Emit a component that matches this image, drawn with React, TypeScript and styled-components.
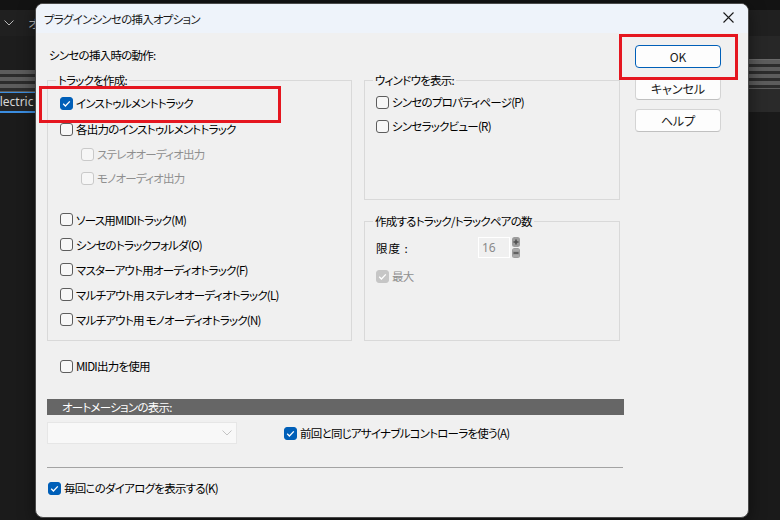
import React from 'react';
import styled, { createGlobalStyle } from 'styled-components';

const GlobalStyle = createGlobalStyle`
    html, body {
        margin: 0;
        padding: 0;
    }
    body {
        width: 780px;
        height: 520px;
        overflow: hidden;
        background: #1a1a1a;
        font-family: 'Noto Sans CJK JP', 'Noto Sans', sans-serif;
    }
`;

interface CheckProps {
    label: string;
    checked?: boolean;
    disabled?: boolean;
}

const CheckMark = () => (
    <svg width="13" height="13" viewBox="0 0 13 13">
        <path d="M3.2 6.8 L5.4 9 L9.8 4.4" stroke="#fff" strokeWidth="1.3" fill="none" />
    </svg>
);

const Check = ({ label, checked, disabled }: CheckProps) => (
    <>
        <Box $checked={checked} $disabled={disabled}>
            {checked && <CheckMark />}
        </Box>
        <Label $disabled={disabled}>{label}</Label>
    </>
);

const CloseIcon = () => (
    <svg width="11" height="11" viewBox="0 0 11 11">
        <path d="M0.5 0.5 L10.5 10.5 M10.5 0.5 L0.5 10.5" stroke="#1a1a1a" strokeWidth="1.1" />
    </svg>
);

const Chevron = ({ color }: { color: string }) => (
    <svg width="10" height="6" viewBox="0 0 10 6" style={{ flexShrink: 0 }}>
        <path d="M0.5 0.5 L5 5 L9.5 0.5" stroke={color} strokeWidth="1" fill="none" />
    </svg>
);

const SpinIcon = () => (
    <svg width="8" height="21" viewBox="0 0 8 21">
        <rect x="0" y="0" width="8" height="10" rx="2.5" fill="#9c9c9c" />
        <rect x="0" y="11" width="8" height="10" rx="2.5" fill="#9c9c9c" />
        <path d="M1.5 5 H6.5 M4 2.5 V7.5" stroke="#4e4e4e" strokeWidth="1.6" />
        <path d="M1.5 16 H6.5" stroke="#4e4e4e" strokeWidth="1.6" />
        <path d="M1 13 H7 M1 19 H7" stroke="#bdbdbd" strokeWidth="0.8" />
    </svg>
);

const App = () => {
    return (
        <Desk>
            <GlobalStyle />
            <TopStrip />
            <Toolbar>
                <ToolGroup>
                    <Chevron color="#b8b8b8" />
                    <ToolText>オ</ToolText>
                </ToolGroup>
            </Toolbar>
            <Workspace>
                <TrackList>
                    <TrackHeader />
                    <Stripes />
                    <SelectedTrack>
                        <span>Electric Piano</span>
                    </SelectedTrack>
                </TrackList>
                <Arranger>
                    <Ruler />
                    <Stripes $tall />
                    <ArrangerRow />
                </Arranger>
            </Workspace>

            <Dialog>
                <TitleBar>
                    <Title>プラグインシンセの挿入オプション</Title>
                    <CloseButton>
                        <CloseIcon />
                    </CloseButton>
                </TitleBar>
                <Body>
                    <MainCol>
                        <Heading>シンセの挿入時の動作:</Heading>
                        <GroupsRow>
                            <Group $width={305} $height={268}>
                                <legend>トラックを作成:</legend>
                                <Row $h={26}>
                                    <Check label="インストゥルメントトラック" checked />
                                </Row>
                                <Row $h={26}>
                                    <Check label="各出力のインストゥルメントトラック" />
                                </Row>
                                <Row $indent={21} $h={24}>
                                    <Check label="ステレオオーディオ出力" disabled />
                                </Row>
                                <Row $indent={21} $h={24}>
                                    <Check label="モノオーディオ出力" disabled />
                                </Row>
                                <Spacer $h={17} />
                                <Row>
                                    <Check label="ソース用MIDIトラック(M)" />
                                </Row>
                                <Row>
                                    <Check label="シンセのトラックフォルダ(O)" />
                                </Row>
                                <Row>
                                    <Check label="マスターアウト用オーディオトラック(F)" />
                                </Row>
                                <Row>
                                    <Check label="マルチアウト用 ステレオオーディオトラック(L)" />
                                </Row>
                                <Row>
                                    <Check label="マルチアウト用 モノオーディオトラック(N)" />
                                </Row>
                            </Group>
                            <RightCol>
                                <Group $width={256} $height={127}>
                                    <legend>ウィンドウを表示:</legend>
                                    <Row $h={24} $indent={-1}>
                                        <Check label="シンセのプロパティページ(P)" />
                                    </Row>
                                    <Row $h={24} $indent={-1}>
                                        <Check label="シンセラックビュー(R)" />
                                    </Row>
                                </Group>
                                <Group $width={256} $height={127}>
                                    <legend>作成するトラック/トラックペアの数</legend>
                                    <LimitRow>
                                        <LimitLabel>限度 :</LimitLabel>
                                        <NumberBox>16</NumberBox>
                                        <SpinIcon />
                                    </LimitRow>
                                    <Row $h={24} $indent={-1} style={{ marginTop: 6 }}>
                                        <Check label="最大" checked disabled />
                                    </Row>
                                </Group>
                            </RightCol>
                        </GroupsRow>
                        <Row $h={24} $indent={13} style={{ marginTop: 13 }}>
                            <Check label="MIDI出力を使用" />
                        </Row>
                        <SectionBar>オートメーションの表示:</SectionBar>
                        <AutomationRow>
                            <Dropdown>
                                <Chevron color="#c4c4c4" />
                            </Dropdown>
                            <Row $h={24} $indent={0}>
                                <Check label="前回と同じアサイナブルコントローラを使う(A)" checked />
                            </Row>
                        </AutomationRow>
                        <Separator />
                        <Row $h={24} $indent={1}>
                            <Check label="毎回このダイアログを表示する(K)" checked />
                        </Row>
                    </MainCol>
                    <ButtonCol>
                        <Button $primary>OK</Button>
                        <Button>キャンセル</Button>
                        <Button>ヘルプ</Button>
                    </ButtonCol>
                </Body>
                <Highlight $left={3} $top={82} $width={242} $height={37} />
                <Highlight $left={583} $top={30} $width={119} $height={46} />
            </Dialog>
        </Desk>
    );
};

export default App;

const Desk = styled.div`
    position: relative;
    width: 780px;
    height: 520px;
    overflow: hidden;
    background: #1a1a1a;
    display: flex;
    flex-direction: column;
`;

const TopStrip = styled.div`
    height: 10px;
    background: #131313;
`;

const Toolbar = styled.div`
    height: 26px;
    background: #202020;
    display: flex;
    align-items: center;
`;

const ToolGroup = styled.div`
    display: flex;
    align-items: center;
    gap: 14px;
    padding-left: 4px;
`;

const ToolText = styled.span`
    color: #bcbcbc;
    font-size: 12px;
    white-space: nowrap;
`;

const Workspace = styled.div`
    display: flex;
    flex: 1;
`;

const TrackList = styled.div`
    width: 320px;
    display: flex;
    flex-direction: column;
    background: #1b1b1b;
`;

const TrackHeader = styled.div`
    height: 34px;
    background: #1d1d1d;
`;

const Stripes = styled.div<{ $tall?: boolean }>`
    height: ${({ $tall }) => ($tall ? '29px' : '22px')};
    background: repeating-linear-gradient(
        to bottom,
        #5c5c5c 0 4px,
        #2c2c2c 4px 7px
    );
`;

const SelectedTrack = styled.div`
    height: 18px;
    border-top: 1px solid #3b8de0;
    border-bottom: 2px solid #3b8de0;
    background: #252525;
    color: #d8d8d8;
    font-family: 'Noto Sans', sans-serif;
    font-size: 12px;
    line-height: 18px;
    white-space: nowrap;
    overflow: hidden;

    span {
        display: inline-block;
        margin-left: -7px;
    }
`;

const Arranger = styled.div`
    flex: 1;
    display: flex;
    flex-direction: column;
    background: #1a1a1a;
`;

const Ruler = styled.div`
    height: 23px;
    background: #272727;
    border-bottom: 1px solid #6a6a6a;
`;

const ArrangerRow = styled.div`
    height: 23px;
    background: #2a2a2a;
`;

const Dialog = styled.div`
    position: absolute;
    left: 35px;
    top: 3px;
    width: 714px;
    height: 515px;
    box-sizing: border-box;
    border: 1px solid #4a4a4a;
    border-radius: 8px;
    background: #f0f0f0;
    overflow: hidden;
    display: flex;
    flex-direction: column;
    font-family: 'Noto Sans CJK JP', 'Noto Sans', sans-serif;
    font-feature-settings: 'palt';
    font-size: 11.5px;
    letter-spacing: -0.75px;
    color: #000;
    box-shadow: 0 4px 16px rgba(0, 0, 0, 0.5);
`;

const TitleBar = styled.div`
    height: 29px;
    background: #eef3fa;
    display: flex;
    align-items: center;
    justify-content: space-between;
    padding: 0 10px 0 8px;
`;

const Title = styled.div`
    color: #1a1a1a;
`;

const CloseButton = styled.div`
    width: 20px;
    display: flex;
    justify-content: center;
    margin-top: -2px;
`;

const Body = styled.div`
    flex: 1;
    display: flex;
    padding-left: 11px;
`;

const MainCol = styled.div`
    width: 578px;
    padding-top: 15px;
    display: flex;
    flex-direction: column;
`;

const Heading = styled.div`
    line-height: 14px;
    height: 14px;
    padding-left: 2px;
    margin-bottom: 11px;
`;

const GroupsRow = styled.div`
    display: flex;
    gap: 12px;
`;

const RightCol = styled.div`
    display: flex;
    flex-direction: column;
    gap: 14px;
`;

const Group = styled.fieldset<{ $width: number; $height: number }>`
    margin: 0;
    padding: 3px 0 0 12px;
    width: ${({ $width }) => $width}px;
    height: ${({ $height }) => $height}px;
    box-sizing: border-box;
    border: 1px solid #d9d9d9;
    border-radius: 0;
    min-width: 0;

    legend {
        padding: 0 2px;
        margin-left: -4px;
        line-height: 14px;
        color: #000;
    }
`;

const Row = styled.div<{ $indent?: number; $h?: number }>`
    display: flex;
    align-items: center;
    gap: 3px;
    height: ${({ $h }) => $h ?? 25}px;
    padding-left: ${({ $indent }) => Math.max($indent ?? 0, 0)}px;
    margin-left: ${({ $indent }) => Math.min($indent ?? 0, 0)}px;
    white-space: nowrap;
`;

const Spacer = styled.div<{ $h: number }>`
    height: ${({ $h }) => $h}px;
`;

const Box = styled.span<{ $checked?: boolean; $disabled?: boolean }>`
    width: 13px;
    height: 13px;
    box-sizing: border-box;
    border-radius: 3px;
    flex-shrink: 0;
    display: inline-flex;
    border: 1px solid
        ${({ $checked, $disabled }) =>
            $checked ? ($disabled ? '#c6c6c6' : '#005fb8') : $disabled ? '#c9c9c9' : '#5d5d5d'};
    background: ${({ $checked, $disabled }) =>
        $checked ? ($disabled ? '#c6c6c6' : '#005fb8') : $disabled ? '#f6f6f6' : '#f7f7f7'};

    svg {
        margin: -1px;
    }
`;

const Label = styled.span<{ $disabled?: boolean }>`
    line-height: 14px;
    color: ${({ $disabled }) => ($disabled ? '#8f8f8f' : '#000')};
`;

const LimitRow = styled.div`
    display: flex;
    align-items: center;
    margin-top: 6px;
    height: 21px;
    margin-left: -1px;
`;

const LimitLabel = styled.span`
    width: 102px;
    letter-spacing: 1px;
`;

const NumberBox = styled.div`
    width: 32px;
    height: 21px;
    box-sizing: border-box;
    border: 1px solid #ffffff;
    background: #f0f0f0;
    color: #8a8a8a;
    font-family: 'Noto Sans', sans-serif;
    font-size: 12px;
    letter-spacing: 0;
    line-height: 19px;
    padding-left: 3px;
    margin-right: 2px;
`;

const SectionBar = styled.div`
    margin-top: 21px;
    height: 16px;
    width: 577px;
    background: #666666;
    color: #ffffff;
    line-height: 16px;
    padding-left: 15px;
    box-sizing: border-box;
`;

const AutomationRow = styled.div`
    display: flex;
    align-items: center;
    margin-top: 6px;
    gap: 47px;
`;

const Dropdown = styled.div`
    width: 190px;
    height: 22px;
    box-sizing: border-box;
    border: 1px solid #e6e6e6;
    background: #f8f8f8;
    display: flex;
    align-items: center;
    justify-content: flex-end;
    padding-right: 4px;
`;

const Separator = styled.div`
    margin-top: 22px;
    width: 576px;
    height: 1px;
    background: #a3a3a3;
    margin-bottom: 8px;
`;

const ButtonCol = styled.div`
    margin-left: 10px;
    padding-top: 12px;
    display: flex;
    flex-direction: column;
    gap: 9px;
`;

const Button = styled.div<{ $primary?: boolean }>`
    width: 86px;
    height: 23px;
    box-sizing: border-box;
    border-radius: 4px;
    border: 1px solid ${({ $primary }) => ($primary ? '#005fb8' : '#d4d4d4')};
    border-bottom-color: ${({ $primary }) => ($primary ? '#005fb8' : '#c0c0c0')};
    background: #fdfdfd;
    display: flex;
    align-items: center;
    justify-content: center;
    color: #1a1a1a;
    letter-spacing: 0;
    font-size: 12px;
`;

const Highlight = styled.div<{ $left: number; $top: number; $width: number; $height: number }>`
    position: absolute;
    left: ${({ $left }) => $left}px;
    top: ${({ $top }) => $top}px;
    width: ${({ $width }) => $width}px;
    height: ${({ $height }) => $height}px;
    box-sizing: border-box;
    border: 3px solid #e5161f;
    pointer-events: none;
`;
